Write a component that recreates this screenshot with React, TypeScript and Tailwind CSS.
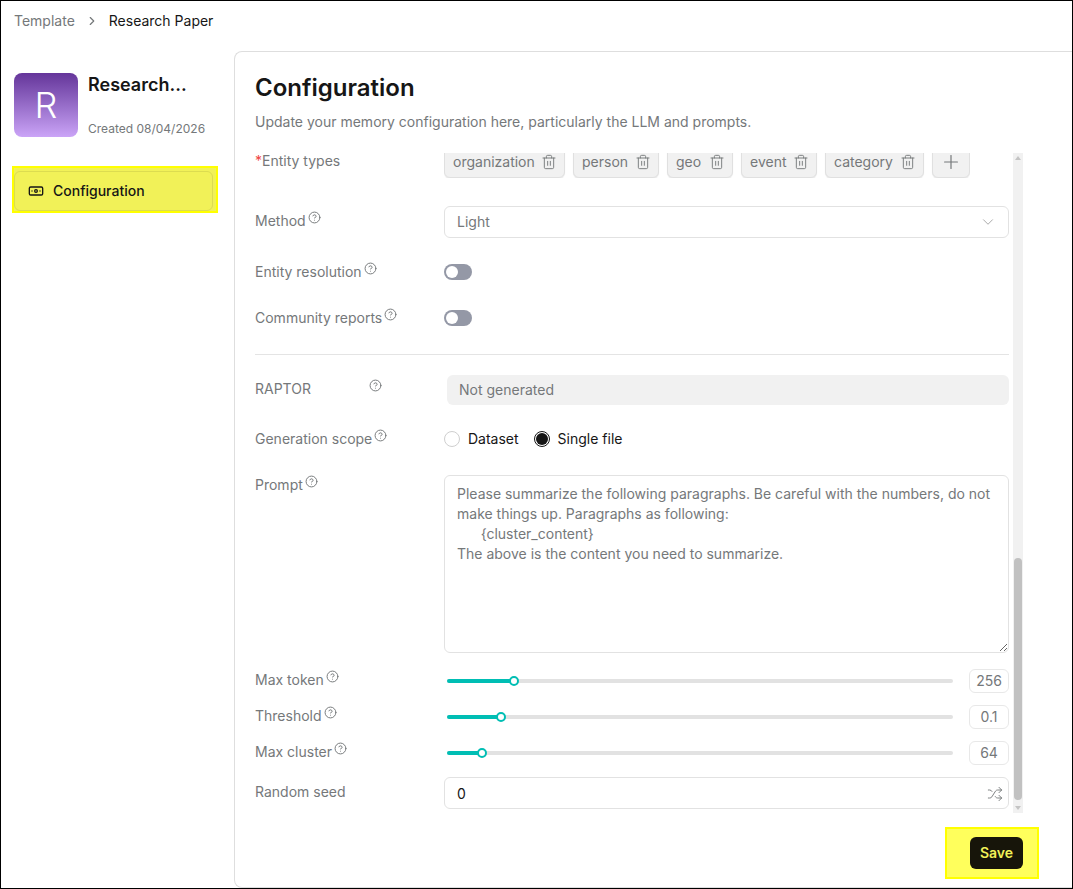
import { Banknote, ChevronDown, ChevronRight, CircleHelp, Plus, Shuffle, Trash2 } from "lucide-react";

const tags = [
  { name: "organization", width: "w-[121px]" },
  { name: "person", width: "w-[86px]" },
  { name: "geo", width: "w-[66px]" },
  { name: "event", width: "w-[76px]" },
  { name: "category", width: "w-[99px]" },
];

const Help = ({ className = "" }: { className?: string }) => (
  <CircleHelp size={13} strokeWidth={1.8} className={`shrink-0 text-[#75787a] ${className}`} />
);

const Label: React.FC<{ text: string; required?: boolean; noHelp?: boolean }> = ({ text, required, noHelp }) => (
  <div className="flex w-[189px] shrink-0 items-start text-sm text-[#75787a]">
    {required && <span className="text-[#ef4444]">*</span>}
    <span>{text}</span>
    {!noHelp && <Help className="ml-[2px]" />}
  </div>
);

const SliderRow: React.FC<{ label: string; percent: number; value: string }> = ({ label, percent, value }) => (
  <div className="flex h-6 items-center">
    <div className="-mt-[2px] flex w-[192px] shrink-0">
      <Label text={label} />
    </div>
    <div className="relative h-1 w-[506px] rounded-full bg-[#e2e2e2]">
      <div className="h-1 rounded-full bg-[#00beb4]" style={{ width: `${percent}%` }} />
      <div
        className="absolute top-[-3px] h-2.5 w-2.5 -translate-x-1/2 rounded-full border-2 border-[#00beb4] bg-white"
        style={{ left: `${percent}%` }}
      />
    </div>
    <div className="ml-4 flex h-6 w-10 items-center justify-center rounded-md border border-[#e8e8e8] text-sm text-[#75787a]">
      {value}
    </div>
  </div>
);

const App = () => {
  return (
    <div className="flex h-[889px] w-[1073px] flex-col overflow-hidden border border-black bg-white font-['Inter',sans-serif] text-[#161616]">
      <div className="flex h-[50px] items-center pb-[10px] pl-[13px] text-sm">
        <span className="text-[#75787a]">Template</span>
        <ChevronRight size={14} className="mx-[10px] text-[#75787a]" />
        <span>Research Paper</span>
      </div>

      <div className="flex min-h-0 flex-1">
        <aside className="w-[233px] shrink-0 pt-[22px]">
          <div className="flex pl-[13px]">
            <div className="flex h-16 w-16 items-center justify-center rounded-lg bg-gradient-to-b from-[#65359a] to-[#cba4f7] text-[36px] font-light text-white">
              R
            </div>
            <div className="ml-[10px] flex flex-col justify-between">
              <div className="text-lg leading-6 font-semibold">Research...</div>
              <div className="text-xs leading-4 text-[#75787a]">Created 08/04/2026</div>
            </div>
          </div>
          <div className="mt-[29px] ml-[11px] w-[206px] border-2 border-[#ffff00] bg-[#f1f158] pt-[3px] pr-[3px]">
            <div className="flex h-10 items-center rounded-md border border-[#dcdc50] bg-[#f1f158] pl-[13px] text-sm font-medium">
              <Banknote size={16} className="mr-[9px]" />
              Configuration
            </div>
          </div>
        </aside>

        <main className="flex min-w-0 flex-1 flex-col rounded-tl-lg rounded-bl-lg border border-r-0 border-[#dedede]">
          <div className="pt-5 pl-5">
            <h1 className="text-2xl leading-8 font-semibold">Configuration</h1>
            <p className="mt-2 text-sm leading-5 text-[#75787a]">
              Update your memory configuration here, particularly the LLM and prompts.
            </p>
          </div>

          <div className="mt-[21px] ml-5 flex h-[660px] w-[768px]">
            <div className="w-[754px] shrink-0 overflow-hidden">
              <div className="flex h-[25px]">
                <div className="-mt-[2px]">
                  <Label text="Entity types" required noHelp />
                </div>
                <div className="flex h-[25px] items-end gap-2 overflow-hidden">
                  {tags.map((tag) => (
                    <div
                      key={tag.name}
                      className={`flex h-8 ${tag.width} items-center justify-between rounded-md border border-[#e0e0e0] bg-[#f1f1f1] pr-[7px] pl-2 text-sm text-[#75787a] shadow-[0_1px_1px_rgba(0,0,0,0.08)]`}
                    >
                      {tag.name}
                      <Trash2 size={16} strokeWidth={1.4} />
                    </div>
                  ))}
                  <div className="flex h-8 w-[38px] items-center justify-center rounded-md border border-[#e0e0e0] bg-[#f1f1f1] text-[#75787a] shadow-[0_1px_1px_rgba(0,0,0,0.08)]">
                    <Plus size={22} strokeWidth={1.3} />
                  </div>
                </div>
              </div>

              <div className="mt-7 flex items-start">
                <div className="pt-[5px]">
                  <Label text="Method" />
                </div>
                <div className="flex h-8 w-[565px] items-center justify-between rounded-md border border-[#e2e2e2] pr-[11px] pl-3 text-sm text-[#75787a]">
                  Light
                  <ChevronDown size={18} strokeWidth={1.2} className="text-[#a0a0a0]" />
                </div>
              </div>

              <div className="mt-[26px] flex h-4 items-center">
                <Label text="Entity resolution" />
                <div className="flex h-4 w-7 items-center rounded-full bg-[#9498a6] pl-[2px]">
                  <div className="h-3 w-3 rounded-full bg-white" />
                </div>
              </div>

              <div className="mt-[30px] flex h-4 items-center">
                <Label text="Community reports" />
                <div className="flex h-4 w-7 items-center rounded-full bg-[#9498a6] pl-[2px]">
                  <div className="h-3 w-3 rounded-full bg-white" />
                </div>
              </div>

              <div className="mt-7 h-px w-[754px] bg-[#e4e4e4]" />

              <div className="mt-5 flex h-[30px] items-center">
                <div className="-mt-[2px] flex w-[192px] shrink-0 items-center text-sm text-[#75787a]">
                  <span className="w-[114px]">RAPTOR</span>
                  <Help className="-mt-2" />
                </div>
                <div className="flex h-[30px] w-[562px] items-center rounded-md bg-[#f1f1f1] pl-3 text-sm text-[#75787a]">
                  Not generated
                </div>
              </div>

              <div className="mt-[26px] flex h-4 items-center">
                <Label text="Generation scope" />
                <div className="h-4 w-4 rounded-full border border-[#cfcfcf]" />
                <span className="ml-2 text-sm">Dataset</span>
                <div className="ml-[15px] flex h-4 w-4 items-center justify-center rounded-full border border-[#161616]">
                  <div className="h-3 w-3 rounded-full bg-[#161616]" />
                </div>
                <span className="ml-2 text-sm">Single file</span>
              </div>

              <div className="mt-7 flex items-start">
                <Label text="Prompt" />
                <textarea
                  readOnly
                  className="h-[178px] w-[565px] rounded-md border border-[#e2e2e2] px-3 py-[8px] text-sm leading-5 text-[#75787a] outline-none"
                  value={"Please summarize the following paragraphs. Be careful with the numbers, do not make things up. Paragraphs as following:\n      {cluster_content}\nThe above is the content you need to summarize."}
                />
              </div>

              <div className="mt-4 flex flex-col gap-3">
                <SliderRow label="Max token" percent={13.2} value="256" />
                <SliderRow label="Threshold" percent={10.7} value="0.1" />
                <SliderRow label="Max cluster" percent={6.9} value="64" />
              </div>

              <div className="mt-3 flex items-center">
                <div className="-mt-[2px]">
                  <Label text="Random seed" noHelp />
                </div>
                <div className="flex h-8 w-[565px] items-center justify-between rounded-md border border-[#e2e2e2] pt-[2px] pr-[5px] pl-3 text-sm">
                  0
                  <Shuffle size={16} strokeWidth={1.4} className="text-[#75787a]" />
                </div>
              </div>
            </div>

            <div className="ml-[4px] flex w-[10px] flex-col items-center bg-[#f1f1f1]">
              <div className="mt-[3px] h-0 w-0 border-x-[3px] border-b-[4px] border-x-transparent border-b-[#c4c4c4]" />
              <div className="mt-[398px] h-[242px] w-2 rounded-full bg-[#c1c1c1]" />
              <div className="mt-[6px] h-0 w-0 border-x-[3px] border-t-[4px] border-x-transparent border-t-[#c4c4c4]" />
            </div>
          </div>

          <div className="mt-[14px] ml-[710px] flex h-[52px] w-[94px] items-center justify-end border-2 border-[#ffff00] bg-[#ffff5c] pr-[14px]">
            <div className="flex h-8 w-[53px] items-center justify-center rounded-md bg-[#17150a] text-sm font-semibold text-[#f1f158]">
              Save
            </div>
          </div>
        </main>
      </div>
    </div>
  );
};

export default App;
